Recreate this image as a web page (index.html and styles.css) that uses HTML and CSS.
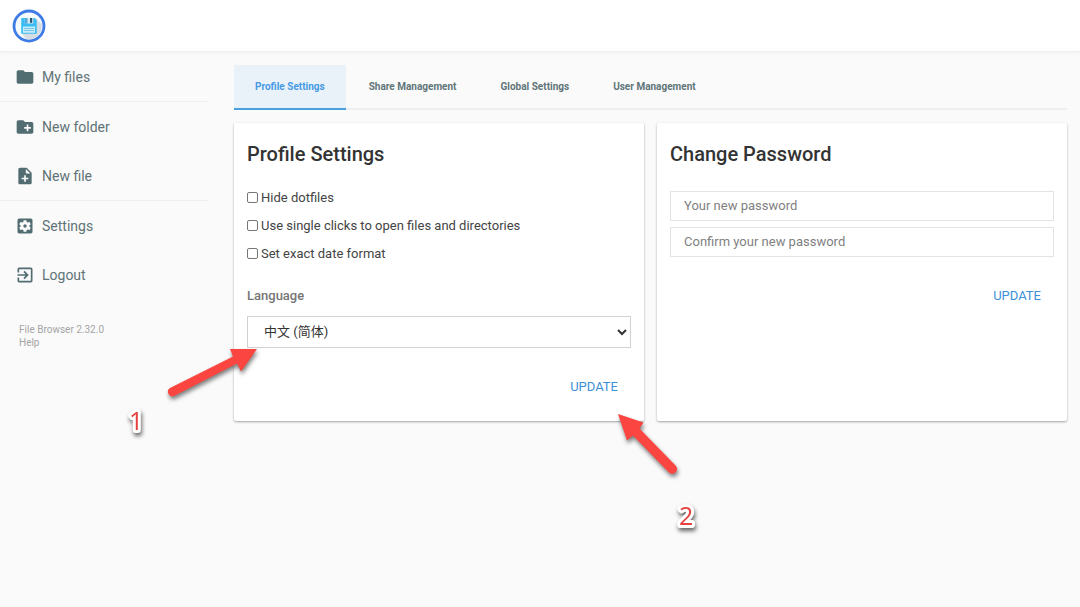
FILE: index.html
```html
<!DOCTYPE html>
<html lang="en">
<head>
<meta charset="utf-8">
<title>Settings - File Browser</title>
<link rel="stylesheet" href="styles.css">
</head>
<body>
<header class="topbar">
  <svg class="logo" viewBox="0 0 34 34" role="img" aria-label="File Browser">
    <circle cx="17" cy="17" r="15" fill="#f6fbfc" stroke="#3f7be6" stroke-width="2.800"/>
    <path d="M24 9.500L29.800 15.500A13.500 13.500 0 0 1 15 30.400L10 25Z" fill="#d6dde2"/>
    <path d="M10 9h12.700l2 2v13.800H10a.8.8 0 0 1-.8-.8V9.800A.8.8 0 0 1 10 9z" fill="#3abdf2"/>
    <path d="M12.800 9h8.500v5.500h-8.500z" fill="#d8e7ee"/>
    <path d="M18 9h2.200v4.800H18z" fill="#275779"/>
    <path d="M13 9h2.500v5.500H13z" fill="#52a9dc"/>
    <path d="M11 17.500h12v6.300H11z" fill="#c6eaf8"/>
    <path d="M12 19.500h10M12 21.500h10" stroke="#64bedf" stroke-width=".8"/>
  </svg>
</header>
<div class="layout">
  <nav class="sidebar">
    <div class="nav-group">
      <button class="action"><svg class="icon" viewBox="0 0 24 24"><path d="M10 4H4c-1.100 0-2 .9-2 2v12c0 1.100.9 2 2 2h16c1.100 0 2-.9 2-2V8c0-1.100-.9-2-2-2h-8l-2-2z"/></svg><span>My files</span></button>
    </div>
    <div class="nav-group">
      <button class="action"><svg class="icon" viewBox="0 0 24 24"><path d="M20 6h-8l-2-2H4c-1.110 0-2 .89-2 2v12c0 1.110.89 2 2 2h16c1.110 0 2-.89 2-2V8c0-1.110-.89-2-2-2zm-1 8h-3v3h-2v-3h-3v-2h3V9h2v3h3v2z"/></svg><span>New folder</span></button>
      <button class="action"><svg class="icon" viewBox="0 0 24 24"><path d="M14 2H6c-1.100 0-2 .9-2 2v16c0 1.100.89 2 1.990 2H18c1.100 0 2-.9 2-2V8l-6-6zm2 14h-3v3h-2v-3H8v-2h3v-3h2v3h3v2zm-3-7V3.500L18.500 9H13z"/></svg><span>New file</span></button>
    </div>
    <div class="nav-group">
      <button class="action"><svg class="icon" viewBox="0 0 24 24"><path d="M12 10c-1.100 0-2 .9-2 2s.9 2 2 2 2-.9 2-2-.9-2-2-2zm7-7H5c-1.110 0-2 .9-2 2v14c0 1.100.89 2 2 2h14c1.110 0 2-.9 2-2V5c0-1.100-.89-2-2-2zm-1.750 9c0 .23-.02.46-.05.68l1.480 1.160c.13.11.17.3.08.45l-1.400 2.420c-.09.15-.27.21-.43.15l-1.740-.7c-.36.28-.76.51-1.180.69l-.26 1.850c-.03.17-.18.3-.35.3h-2.800c-.17 0-.32-.13-.35-.29l-.26-1.850c-.43-.18-.82-.41-1.180-.69l-1.740.7c-.16.06-.34 0-.43-.15l-1.400-2.420c-.09-.15-.05-.34.08-.45l1.480-1.160c-.03-.23-.05-.46-.05-.69 0-.23.02-.46.05-.68l-1.480-1.160c-.13-.11-.17-.3-.08-.45l1.400-2.420c.09-.15.27-.21.43-.15l1.740.7c.36-.28.76-.51 1.180-.69l.26-1.850c.03-.17.18-.3.35-.3h2.800c.17 0 .32.13.35.29l.26 1.850c.43.18.82.41 1.180.69l1.740-.7c.16-.06.34 0 .43.15l1.400 2.420c.09.15.05.34-.08.45l-1.480 1.160c.03.23.05.46.05.69z"/></svg><span>Settings</span></button>
      <button class="action"><svg class="icon" viewBox="0 0 24 24"><path d="M10.090 15.590L11.500 17l5-5-5-5-1.410 1.410L12.670 11H3v2h9.670l-2.580 2.590zM19 3H5c-1.110 0-2 .9-2 2v4h2V5h14v14H5v-4H3v4c0 1.100.89 2 2 2h14c1.100 0 2-.9 2-2V5c0-1.100-.9-2-2-2z"/></svg><span>Logout</span></button>
    </div>
    <div class="credits">
      <a href="#">File Browser 2.32.0</a>
      <a href="#">Help</a>
    </div>
  </nav>
  <main class="content">
    <nav class="tabs">
      <a class="tab active" href="#">Profile Settings</a>
      <a class="tab" href="#">Share Management</a>
      <a class="tab" href="#">Global Settings</a>
      <a class="tab" href="#">User Management</a>
    </nav>
    <div class="cards">
      <form class="card">
        <h2 class="card-title">Profile Settings</h2>
        <div class="options">
          <label class="option"><input class="check" type="checkbox">Hide dotfiles</label>
          <label class="option"><input class="check" type="checkbox">Use single clicks to open files and directories</label>
          <label class="option"><input class="check" type="checkbox">Set exact date format</label>
        </div>
        <label class="field-label" for="language">Language</label>
        <select class="select" id="language"><option>中文 (简体)</option></select>
        <div class="card-action"><button class="update" type="button">UPDATE</button></div>
      </form>
      <form class="card">
        <h2 class="card-title">Change Password</h2>
        <div class="passwords">
          <input class="text-input" type="password" placeholder="Your new password" aria-label="Your new password">
          <input class="text-input" type="password" placeholder="Confirm your new password" aria-label="Confirm your new password">
        </div>
        <div class="card-action"><button class="update" type="button">UPDATE</button></div>
      </form>
    </div>
  </main>
</div>
<svg class="annotations" width="1080" height="607" viewBox="0 0 1080 607">
  <g class="arrow">
    <path d="M257 349L241 371.500L237 363.500L174 396A4.500 4.500 0 0 1 170 388L233 356.500L230 349Z"/>
    <path d="M618 414L643.500 422.500L639.500 428.500L675.500 465.500A4.500 4.500 0 0 1 669 472.500L633 435.500L627 440.500Z"/>
  </g>
  <text class="step" x="129" y="430">1</text>
  <text class="step" x="679" y="525">2</text>
</svg>
</body>
</html>
```

FILE: styles.css
```css
* { box-sizing: border-box; }

body {
  margin: 0;
  min-height: 100vh;
  background: #fafafa;
  color: #333;
  font-family: Roboto, "Noto Sans CJK SC", sans-serif;
  font-size: 13px;
}

button, input, select { font: inherit; }
a { text-decoration: none; }

.topbar {
  display: flex;
  align-items: center;
  height: 52px;
  padding: 0 12px;
  background: #fff;
  border-bottom: 1px solid #f0f0f0;
  box-shadow: 0 1px 3px rgba(0, 0, 0, .04);
}
.logo { width: 34px; height: 34px; }

.layout { display: flex; }

.sidebar { flex: 0 0 208px; }
.nav-group { border-bottom: 1px solid #eee; }
.nav-group:nth-child(3) { border-bottom: 0; }
.action {
  display: flex;
  align-items: center;
  gap: 7px;
  width: 100%;
  height: 49px;
  padding: 0 15px;
  border: 0;
  background: none;
  color: #5f7376;
  font-size: 14px;
  cursor: pointer;
}
.icon { width: 20px; height: 20px; fill: #526d72; }
.credits {
  display: flex;
  flex-direction: column;
  padding: 24px 19px;
  font-size: 10px;
  line-height: 13px;
}
.credits a { color: #a5a5a5; }

.content { flex: 1; min-width: 0; padding: 13px 13px 13px 26px; }
.tabs { display: flex; gap: 2px; border-bottom: 2px solid #eee; }
.tab {
  margin-bottom: -2px;
  padding: 15px 21px;
  border-bottom: 2px solid transparent;
  color: #607579;
  font-size: 10px;
  font-weight: 700;
  line-height: 13px;
}
.tab.active {
  background: #e9f2f8;
  border-color: #4a9fde;
  color: #489ae4;
}

.cards {
  display: grid;
  grid-template-columns: 1fr 1fr;
  gap: 13px;
  margin-top: 13px;
}
.card {
  display: flex;
  flex-direction: column;
  padding: 19px 13px 20px;
  background: #fff;
  border-radius: 2px;
  box-shadow: 0 1px 3px rgba(0, 0, 0, .12), 0 1px 2px rgba(0, 0, 0, .24);
}
.card-title { margin: 0; font-size: 20px; font-weight: 500; line-height: 24px; }
.options { display: grid; gap: 12px; margin-top: 24px; }
.option { display: flex; align-items: center; gap: 3px; line-height: 16px; color: #444; }
.check {
  appearance: none;
  width: 11px;
  height: 11px;
  margin: 0 0 2px;
  border: 1px solid #767676;
  border-radius: 2px;
  background: #fff;
}
.check:checked { background: #2196f3; }
.field-label { margin-top: 26px; color: #757575; font-weight: 500; line-height: 16px; }
.select {
  width: 100%;
  height: 32px;
  margin-top: 12px;
  padding: 0 0 2px 12px;
  border: 1px solid #d2d2d2;
  border-radius: 0;
  background: #fff;
  color: #333;
}
.passwords { display: grid; gap: 6px; margin-top: 25px; }
.text-input {
  width: 100%;
  height: 30px;
  padding: 0 13px 2px;
  border: 1px solid #e3e3e3;
  color: #333;
}
.text-input::placeholder { color: #7f7f7f; }
.card-action { display: flex; justify-content: flex-end; margin-top: 24px; }
.update {
  height: 29px;
  padding: 0 13px;
  border: 0;
  background: none;
  color: #3d8fd8;
  cursor: pointer;
}

.annotations { position: absolute; top: 0; left: 0; pointer-events: none; }
.arrow { fill: #fa4540; filter: drop-shadow(1px 3px 2px rgba(0, 0, 0, .5)); }
.step {
  fill: #e5413f;
  stroke: #fff;
  stroke-width: 6px;
  stroke-linejoin: round;
  paint-order: stroke;
  font-family: "Open Sans", sans-serif;
  font-size: 25px;
  font-weight: 500;
  filter: drop-shadow(1px 3px 2px rgba(0, 0, 0, .6));
}
```
